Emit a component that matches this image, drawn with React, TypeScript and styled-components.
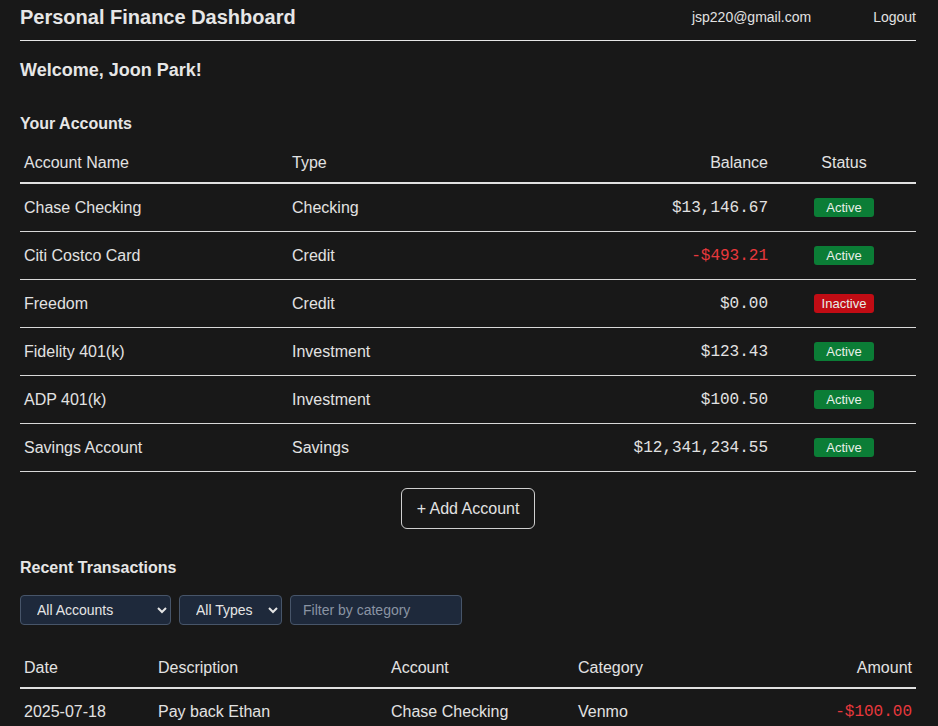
import React from "react";
import styled, { createGlobalStyle } from "styled-components";

const Global = createGlobalStyle`
  html, body { margin: 0; padding: 0; background: #181818; overflow: hidden; }
  body { font-family: "Liberation Sans", Arial, sans-serif; color: #e2e2e2; }
  * { box-sizing: border-box; }
`;

const Page = styled.div`
  padding: 0 22px 0 20px;
`;

const Header = styled.header`
  display: flex;
  align-items: center;
  justify-content: space-between;
  padding: 6px 0 11px;
  border-bottom: 1px solid #e6e6e6;
`;

const Title = styled.h1`
  margin: 0;
  font-size: 20px;
  line-height: 23px;
  font-weight: 700;
  color: #e6e6e6;
`;

const UserBox = styled.div`
  display: flex;
  align-items: center;
  gap: 62px;
  font-size: 14px;
  line-height: 16px;
  margin-bottom: 2px;
  color: #e2e2e2;
`;

const LinkButton = styled.button`
  background: none;
  border: none;
  padding: 0;
  font: inherit;
  color: inherit;
  cursor: pointer;
`;

const Welcome = styled.h2`
  margin: 19px 0 0;
  font-size: 18px;
  line-height: 21px;
  font-weight: 700;
  color: #e6e6e6;
`;

const SectionTitle = styled.h3<{ $top: number; $bottom: number }>`
  margin: ${(p) => p.$top}px 0 ${(p) => p.$bottom}px;
  font-size: 16px;
  line-height: 18px;
  font-weight: 700;
  color: #e6e6e6;
`;

const Table = styled.table`
  width: 100%;
  border-collapse: collapse;
  table-layout: fixed;
  font-size: 16px;
`;

const Th = styled.th<{ $align?: string }>`
  text-align: ${(p) => p.$align || "left"};
  font-weight: 400;
  padding: 12px 4px 10px;
  line-height: 18px;
  border-bottom: 2px solid #e0e0e0;
  color: #e2e2e2;
`;

const Td = styled.td<{ $align?: string }>`
  text-align: ${(p) => p.$align || "left"};
  padding: 14px 4px;
  height: 47.7px;
  line-height: 18px;
  border-bottom: 1px solid #d8d8d8;
  color: #e2e2e2;
  vertical-align: middle;
`;

const Money = styled.span<{ $neg?: boolean }>`
  display: inline-block;
  vertical-align: top;
  line-height: 18px;
  font-family: "Liberation Mono", "Courier New", monospace;
  font-size: 16px;
  color: ${(p) => (p.$neg ? "#e8383d" : "#e2e2e2")};
`;

const Badge = styled.span<{ $active: boolean }>`
  display: inline-block;
  vertical-align: top;
  width: 60px;
  height: 19px;
  line-height: 19px;
  border-radius: 3px;
  font-size: 13px;
  text-align: center;
  color: #e8efe9;
  background: ${(p) => (p.$active ? "#0b7d36" : "#c10c14")};
`;

const Center = styled.div`
  display: flex;
  justify-content: center;
  margin-top: 16px;
`;

const OutlineButton = styled.button`
  height: 41px;
  padding: 0 15px;
  background: transparent;
  border: 1px solid #d0d0d0;
  border-radius: 6px;
  color: #e2e2e2;
  font-family: "Liberation Sans", Arial, sans-serif;
  font-size: 16px;
  cursor: pointer;
`;

const Filters = styled.div`
  display: flex;
  gap: 8px;
  margin-bottom: 22px;
`;

const Select = styled.select<{ $w: number }>`
  width: ${(p) => p.$w}px;
  height: 30px;
  padding: 0 4px 0 12px;
  background: #1e293b;
  border: 1px solid #475569;
  border-radius: 4px;
  color: #e5e5e5;
  font-family: "Liberation Sans", Arial, sans-serif;
  font-size: 14px;
  color-scheme: dark;
`;

const Input = styled.input`
  width: 172px;
  height: 30px;
  padding: 0 12px;
  background: #1e293b;
  border: 1px solid #475569;
  border-radius: 4px;
  color: #e5e5e5;
  font-family: "Liberation Sans", Arial, sans-serif;
  font-size: 14px;
  &::placeholder { color: #8a94a3; }
`;

const accounts = [
  { name: "Chase Checking", type: "Checking", bal: "$13,146.67", neg: false, active: true },
  { name: "Citi Costco Card", type: "Credit", bal: "-$493.21", neg: true, active: true },
  { name: "Freedom", type: "Credit", bal: "$0.00", neg: false, active: false },
  { name: "Fidelity 401(k)", type: "Investment", bal: "$123.43", neg: false, active: true },
  { name: "ADP 401(k)", type: "Investment", bal: "$100.50", neg: false, active: true },
  { name: "Savings Account", type: "Savings", bal: "$12,341,234.55", neg: false, active: true },
];

const txns = [
  { date: "2025-07-18", desc: "Pay back Ethan", acct: "Chase Checking", cat: "Venmo", amt: "-$100.00", neg: true },
];

export default function App() {
  return (
    <Page>
      <Global />
      <Header>
        <Title>Personal Finance Dashboard</Title>
        <UserBox>
          <span>jsp220@gmail.com</span>
          <LinkButton>Logout</LinkButton>
        </UserBox>
      </Header>
      <Welcome>Welcome, Joon Park!</Welcome>

      <SectionTitle $top={34} $bottom={9}>Your Accounts</SectionTitle>
      <Table>
        <colgroup>
          <col style={{ width: 268 }} />
          <col style={{ width: 240 }} />
          <col style={{ width: 244 }} />
          <col style={{ width: 144 }} />
        </colgroup>
        <thead>
          <tr>
            <Th>Account Name</Th>
            <Th>Type</Th>
            <Th $align="right">Balance</Th>
            <Th $align="center">Status</Th>
          </tr>
        </thead>
        <tbody>
          {accounts.map((a) => (
            <tr key={a.name}>
              <Td>{a.name}</Td>
              <Td>{a.type}</Td>
              <Td $align="right">
                <Money $neg={a.neg}>{a.bal}</Money>
              </Td>
              <Td $align="center">
                <Badge $active={a.active}>{a.active ? "Active" : "Inactive"}</Badge>
              </Td>
            </tr>
          ))}
        </tbody>
      </Table>
      <Center>
        <OutlineButton>+ Add Account</OutlineButton>
      </Center>

      <SectionTitle $top={30} $bottom={18}>Recent Transactions</SectionTitle>
      <Filters>
        <Select $w={151} defaultValue="all">
          <option value="all">All Accounts</option>
          {accounts.map((a) => (
            <option key={a.name}>{a.name}</option>
          ))}
        </Select>
        <Select $w={103} defaultValue="all">
          <option value="all">All Types</option>
          <option>Income</option>
          <option>Expense</option>
        </Select>
        <Input placeholder="Filter by category" />
      </Filters>
      <Table>
        <colgroup>
          <col style={{ width: 134 }} />
          <col style={{ width: 233 }} />
          <col style={{ width: 187 }} />
          <col style={{ width: 200 }} />
          <col style={{ width: 142 }} />
        </colgroup>
        <thead>
          <tr>
            <Th>Date</Th>
            <Th>Description</Th>
            <Th>Account</Th>
            <Th>Category</Th>
            <Th $align="right">Amount</Th>
          </tr>
        </thead>
        <tbody>
          {txns.map((t) => (
            <tr key={t.date + t.desc}>
              <Td>{t.date}</Td>
              <Td>{t.desc}</Td>
              <Td>{t.acct}</Td>
              <Td>{t.cat}</Td>
              <Td $align="right">
                <Money $neg={t.neg}>{t.amt}</Money>
              </Td>
            </tr>
          ))}
        </tbody>
      </Table>
    </Page>
  );
}
